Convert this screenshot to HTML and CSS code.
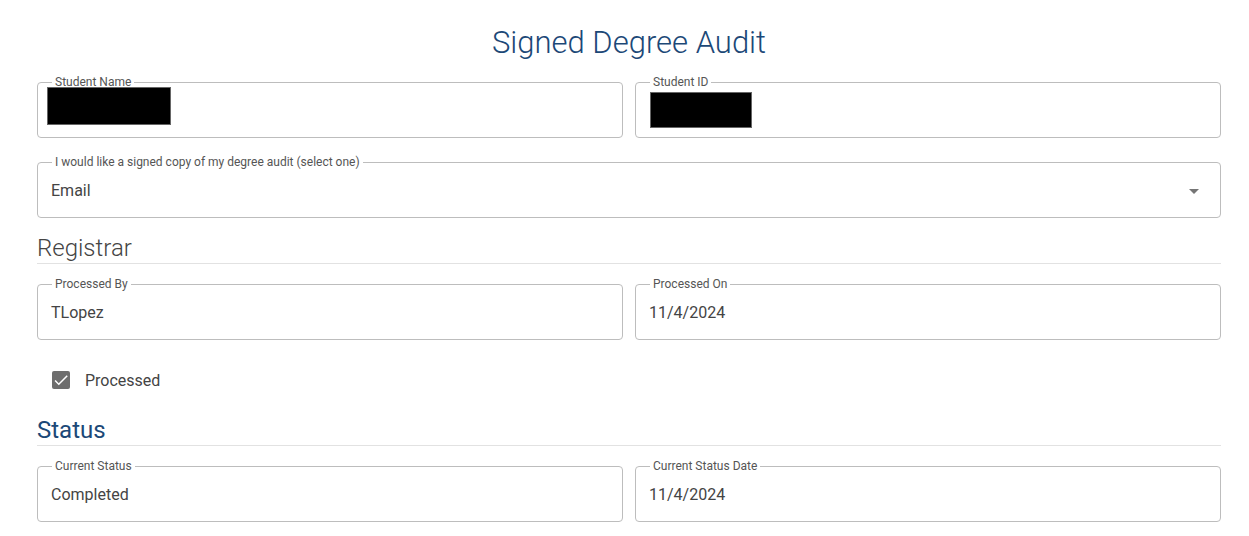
FILE: index.html
```html
<!DOCTYPE html>
<html lang="en">
<head>
    <meta charset="UTF-8">
    <meta name="viewport" content="width=device-width, initial-scale=1.0">
    <title>Signed Degree Audit</title>
    <link rel="stylesheet" href="styles.css">
</head>
<body>
    <div class="page">
        <h1 class="title">Signed Degree Audit</h1>

        <div class="row">
            <fieldset class="field">
                <legend>Student Name</legend>
                <div class="value"><span class="redact redact-name"></span></div>
            </fieldset>
            <fieldset class="field">
                <legend>Student ID</legend>
                <div class="value"><span class="redact redact-id"></span></div>
            </fieldset>
        </div>

        <fieldset class="field field-select">
            <legend>I would like a signed copy of my degree audit (select one)</legend>
            <div class="value select-value">
                <span>Email</span>
                <span class="arrow"></span>
            </div>
        </fieldset>

        <h2 class="section">Registrar</h2>

        <div class="row">
            <fieldset class="field">
                <legend>Processed By</legend>
                <div class="value">TLopez</div>
            </fieldset>
            <fieldset class="field">
                <legend>Processed On</legend>
                <div class="value">11/4/2024</div>
            </fieldset>
        </div>

        <label class="check-row">
            <span class="checkbox">
                <svg width="18" height="18" viewBox="0 0 24 24"><path d="M9 16.2L4.8 12l-1.4 1.4L9 19 21 7l-1.4-1.4L9 16.2z" fill="#fff"/></svg>
            </span>
            <span>Processed</span>
        </label>

        <h2 class="section section-blue">Status</h2>

        <div class="row">
            <fieldset class="field">
                <legend>Current Status</legend>
                <div class="value">Completed</div>
            </fieldset>
            <fieldset class="field">
                <legend>Current Status Date</legend>
                <div class="value">11/4/2024</div>
            </fieldset>
        </div>
    </div>
</body>
</html>
```

FILE: styles.css
```css
body {
    margin: 0;
    background-color: #fff;
    font-family: 'Roboto', 'Liberation Sans', sans-serif;
    color: #444;
}
.page {
    padding: 23px 28px 0 37px;
}
.title {
    margin: 0 0 12px;
    font-size: 31px;
    line-height: 40px;
    font-weight: 300;
    color: #1c4877;
    text-align: center;
}
.row {
    display: grid;
    grid-template-columns: 1fr 1fr;
    gap: 12px;
    margin-bottom: 17px;
}
.field {
    margin: 0;
    min-width: 0;
    padding: 0 13px 14px;
    border: 1px solid #bdbdbd;
    border-radius: 4px;
}
.field legend {
    margin-left: 1px;
    padding: 0 3px;
    font-size: 12px;
    line-height: 14px;
    color: #555;
}
.value {
    height: 24px;
    padding-top: 10px;
    font-size: 16px;
    line-height: 24px;
    color: #444;
}
.redact {
    display: block;
    background-color: #000;
    border: 1px solid #666;
    box-sizing: border-box;
}
.redact-name {
    width: 124px;
    height: 38px;
    margin: -12px 0 0 -4px;
}
.redact-id {
    width: 102px;
    height: 36px;
    margin: -7px 0 0 1px;
}
.select-value {
    display: flex;
    justify-content: space-between;
    align-items: center;
}
.arrow {
    width: 0;
    height: 0;
    margin-right: 8px;
    border-left: 5px solid transparent;
    border-right: 5px solid transparent;
    border-top: 5px solid #757575;
}
.section {
    margin: 16px 0 13px;
    padding-bottom: 1px;
    font-size: 24px;
    line-height: 28px;
    font-weight: 300;
    color: #444;
    border-bottom: 1px solid #e2e2e2;
}
.section-blue {
    color: #1c4877;
    font-weight: 400;
    margin-top: 16px;
}
.check-row {
    display: flex;
    align-items: center;
    gap: 15px;
    height: 40px;
    margin-top: 20px;
    padding-left: 15px;
    font-size: 16px;
    color: #444;
}
.checkbox {
    width: 18px;
    height: 18px;
    border-radius: 2px;
    background-color: #6e6e6e;
    display: flex;
    align-items: center;
    justify-content: center;
}
```
